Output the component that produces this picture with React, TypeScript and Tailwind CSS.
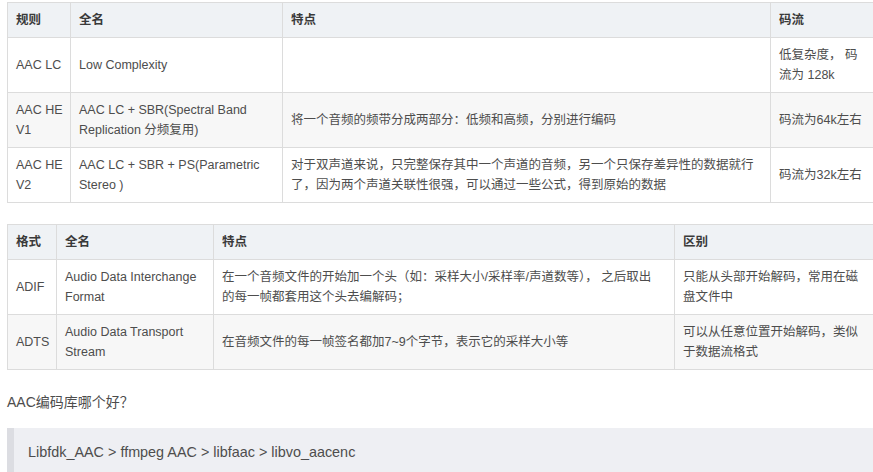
import React from 'react';

type Cell = React.ReactNode;

interface TableProps {
  widths: number[];
  head: Cell[];
  rows: Cell[][];
}

const font = { fontFamily: '"Liberation Sans", Arial, "Noto Sans CJK SC", sans-serif' };

const DocTable: React.FC<TableProps> = ({ widths, head, rows }) => (
  <table className="table-fixed border-collapse w-[867px] text-[12.5px] leading-[20px] text-[#4d4d4d]">
    <colgroup>
      {widths.map((w, i) => (
        <col key={i} style={{ width: w }} />
      ))}
    </colgroup>
    <thead>
      <tr className="bg-[#eff2f5]">
        {head.map((h, i) => (
          <th key={i} className={`border border-[#dcdcdc] pl-2 py-[7px] text-left font-bold text-[#3a3a3a] align-middle ${i === 0 ? 'pr-1' : 'pr-2'}`}>
            {h}
          </th>
        ))}
      </tr>
    </thead>
    <tbody>
      {rows.map((row, r) => (
        <tr key={r} className={r % 2 === 1 ? 'bg-[#f7f7f7]' : 'bg-white'}>
          {row.map((c, i) => (
            <td key={i} className={`border border-[#dcdcdc] pl-2 py-[7px] align-middle ${i === 0 ? 'pr-1' : 'pr-2'}`}>
              {c}
            </td>
          ))}
        </tr>
      ))}
    </tbody>
  </table>
);

export default function App() {
  return (
    <div className="w-[873px] h-[472px] overflow-hidden bg-white pl-[7px] pt-[2px]" style={font}>
      <DocTable
        widths={[63, 212, 488, 104]}
        head={['规则', '全名', '特点', '码流']}
        rows={[
          ['AAC LC', 'Low Complexity', '', '低复杂度， 码流为 128k'],
          ['AAC HE V1', 'AAC LC + SBR(Spectral Band Replication 分频复用)', '将一个音频的频带分成两部分：低频和高频，分别进行编码', '码流为64k左右'],
          [
            'AAC HE V2',
            'AAC LC + SBR + PS(Parametric Stereo )',
            '对于双声道来说，只完整保存其中一个声道的音频，另一个只保存差异性的数据就行了，因为两个声道关联性很强，可以通过一些公式，得到原始的数据',
            '码流为32k左右',
          ],
        ]}
      />

      <div className="mt-[21px]">
        <DocTable
          widths={[49, 157, 461, 200]}
          head={['格式', '全名', '特点', '区别']}
          rows={[
            [
              'ADIF',
              'Audio Data Interchange Format',
              <>
                在一个音频文件的开始加一个头（如：采样大小/采样率/声道数等）， 之后取出
                <br />
                的每一帧都套用这个头去编解码；
              </>,
              '只能从头部开始解码，常用在磁盘文件中',
            ],
            ['ADTS', 'Audio Data Transport Stream', '在音频文件的每一帧签名都加7~9个字节，表示它的采样大小等', '可以从任意位置开始解码，类似于数据流格式'],
          ]}
        />
      </div>

      <p className="mt-[22px] text-[14px] leading-[20px] text-[#4d4d4d]">AAC编码库哪个好？</p>

      <div className="mt-4 bg-[#eeeff3] border-l-[7px] border-[#dcdde2] pl-[14px] pt-[14px] pb-4 text-[14.4px] leading-[20px] text-[#4d4d4d]">
        Libfdk_AAC &gt; ffmpeg AAC &gt; libfaac &gt; libvo_aacenc
      </div>
    </div>
  );
}
